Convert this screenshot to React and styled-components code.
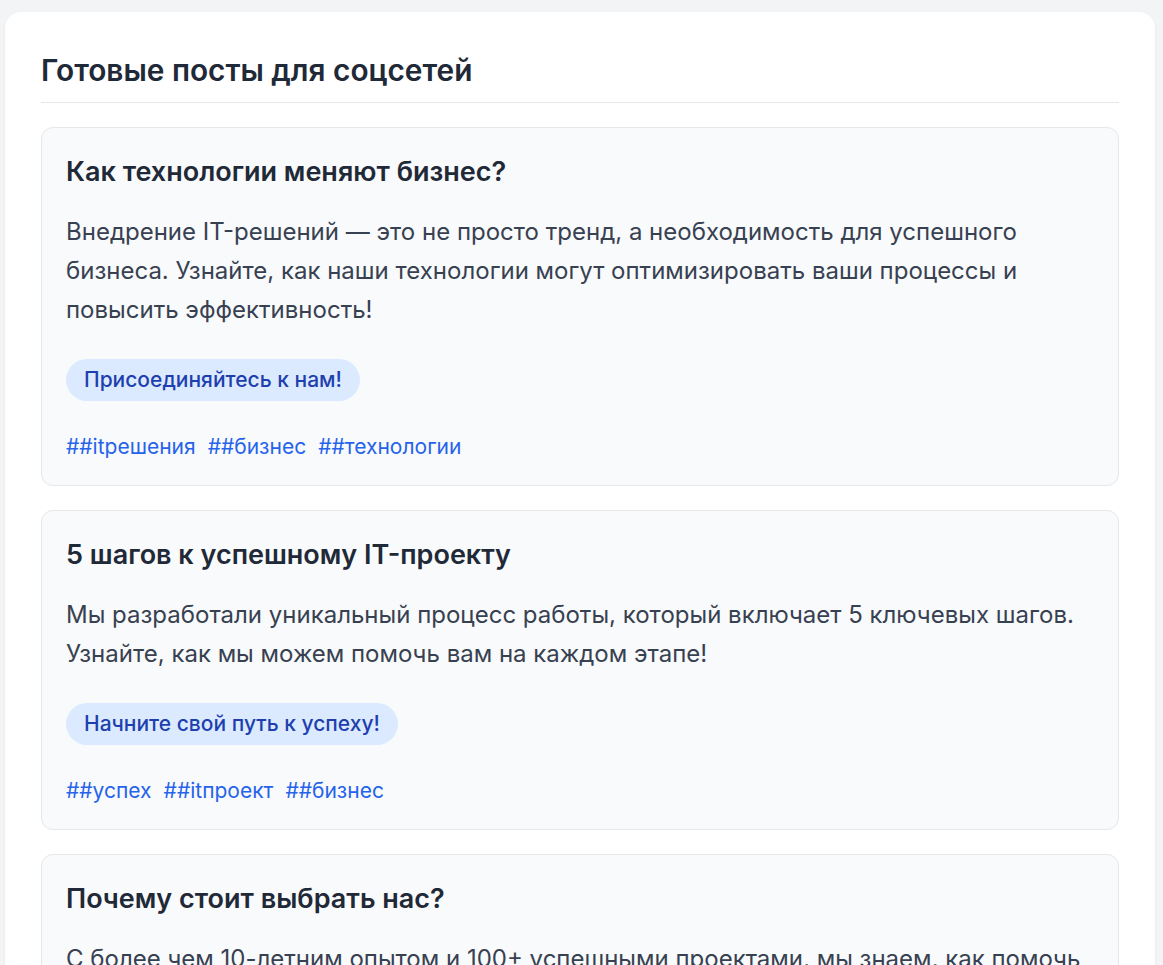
import styled, { createGlobalStyle } from "styled-components";

const posts = [
  {
    title: "Как технологии меняют бизнес?",
    text: "Внедрение IT-решений — это не просто тренд, а необходимость для успешного бизнеса. Узнайте, как наши технологии могут оптимизировать ваши процессы и повысить эффективность!",
    cta: "Присоединяйтесь к нам!",
    tags: ["#itрешения", "#бизнес", "#технологии"],
  },
  {
    title: "5 шагов к успешному IT-проекту",
    text: "Мы разработали уникальный процесс работы, который включает 5 ключевых шагов. Узнайте, как мы можем помочь вам на каждом этапе!",
    cta: "Начните свой путь к успеху!",
    tags: ["#успех", "#itпроект", "#бизнес"],
  },
  {
    title: "Почему стоит выбрать нас?",
    text: "С более чем 10-летним опытом и 100+ успешными проектами, мы знаем, как помочь вашему бизнесу расти. Доверьте свои задачи профессионалам!",
    cta: "Свяжитесь с нами сегодня!",
    tags: ["#опыт", "#профессионалы", "#бизнес"],
  },
];

const App = () => {
  return (
    <>
      <GlobalStyle />
      <Page>
        <Panel>
          <Heading>Готовые посты для соцсетей</Heading>
          <PostList>
            {posts.map((post) => (
              <Post key={post.title}>
                <PostTitle>{post.title}</PostTitle>
                <PostText>{post.text}</PostText>
                <Cta>{post.cta}</Cta>
                <Tags>
                  {post.tags.map((tag) => (
                    <Tag key={tag}>#{tag}</Tag>
                  ))}
                </Tags>
              </Post>
            ))}
          </PostList>
        </Panel>
      </Page>
    </>
  );
};

export default App;

const GlobalStyle = createGlobalStyle`
  body {
    margin: 0;
    background: #f3f4f6;
    font-family: Inter, "Noto Sans", sans-serif;
  }
`;

const Page = styled.div`
  padding: 12px 8px 0 5px;
`;

const Panel = styled.div`
  background: #ffffff;
  border-radius: 16px;
  padding: 36px 36px 40px;
  box-shadow: 0 1px 3px rgba(0, 0, 0, 0.06);
`;

const Heading = styled.h2`
  margin: 0 0 24px;
  padding-bottom: 10px;
  border-bottom: 1px solid #e5e7eb;
  font-size: 29.8px;
  line-height: 44px;
  font-weight: 600;
  color: #1f2937;
`;

const PostList = styled.div`
  display: flex;
  flex-direction: column;
  gap: 24px;
`;

const Post = styled.div`
  background: #f9fafb;
  border: 1px solid #e5e7eb;
  border-radius: 12px;
  padding: 24px;
  display: flex;
  flex-direction: column;
  align-items: flex-start;
`;

const PostTitle = styled.h3`
  margin: 0 0 20px;
  font-size: 27px;
  line-height: 40px;
  font-weight: 600;
  color: #1f2937;
`;

const PostText = styled.p`
  margin: 0 0 30px;
  font-size: 24px;
  line-height: 39px;
  color: #374151;
`;

const Cta = styled.span`
  display: inline-block;
  background: #dbeafe;
  color: #1e40af;
  font-size: 21px;
  font-weight: 500;
  line-height: 42px;
  padding: 0 18px;
  border-radius: 999px;
  margin-bottom: 31px;
`;

const Tags = styled.div`
  display: flex;
  gap: 12px;
`;

const Tag = styled.span`
  color: #2563eb;
  font-size: 21px;
  line-height: 29px;
`;
